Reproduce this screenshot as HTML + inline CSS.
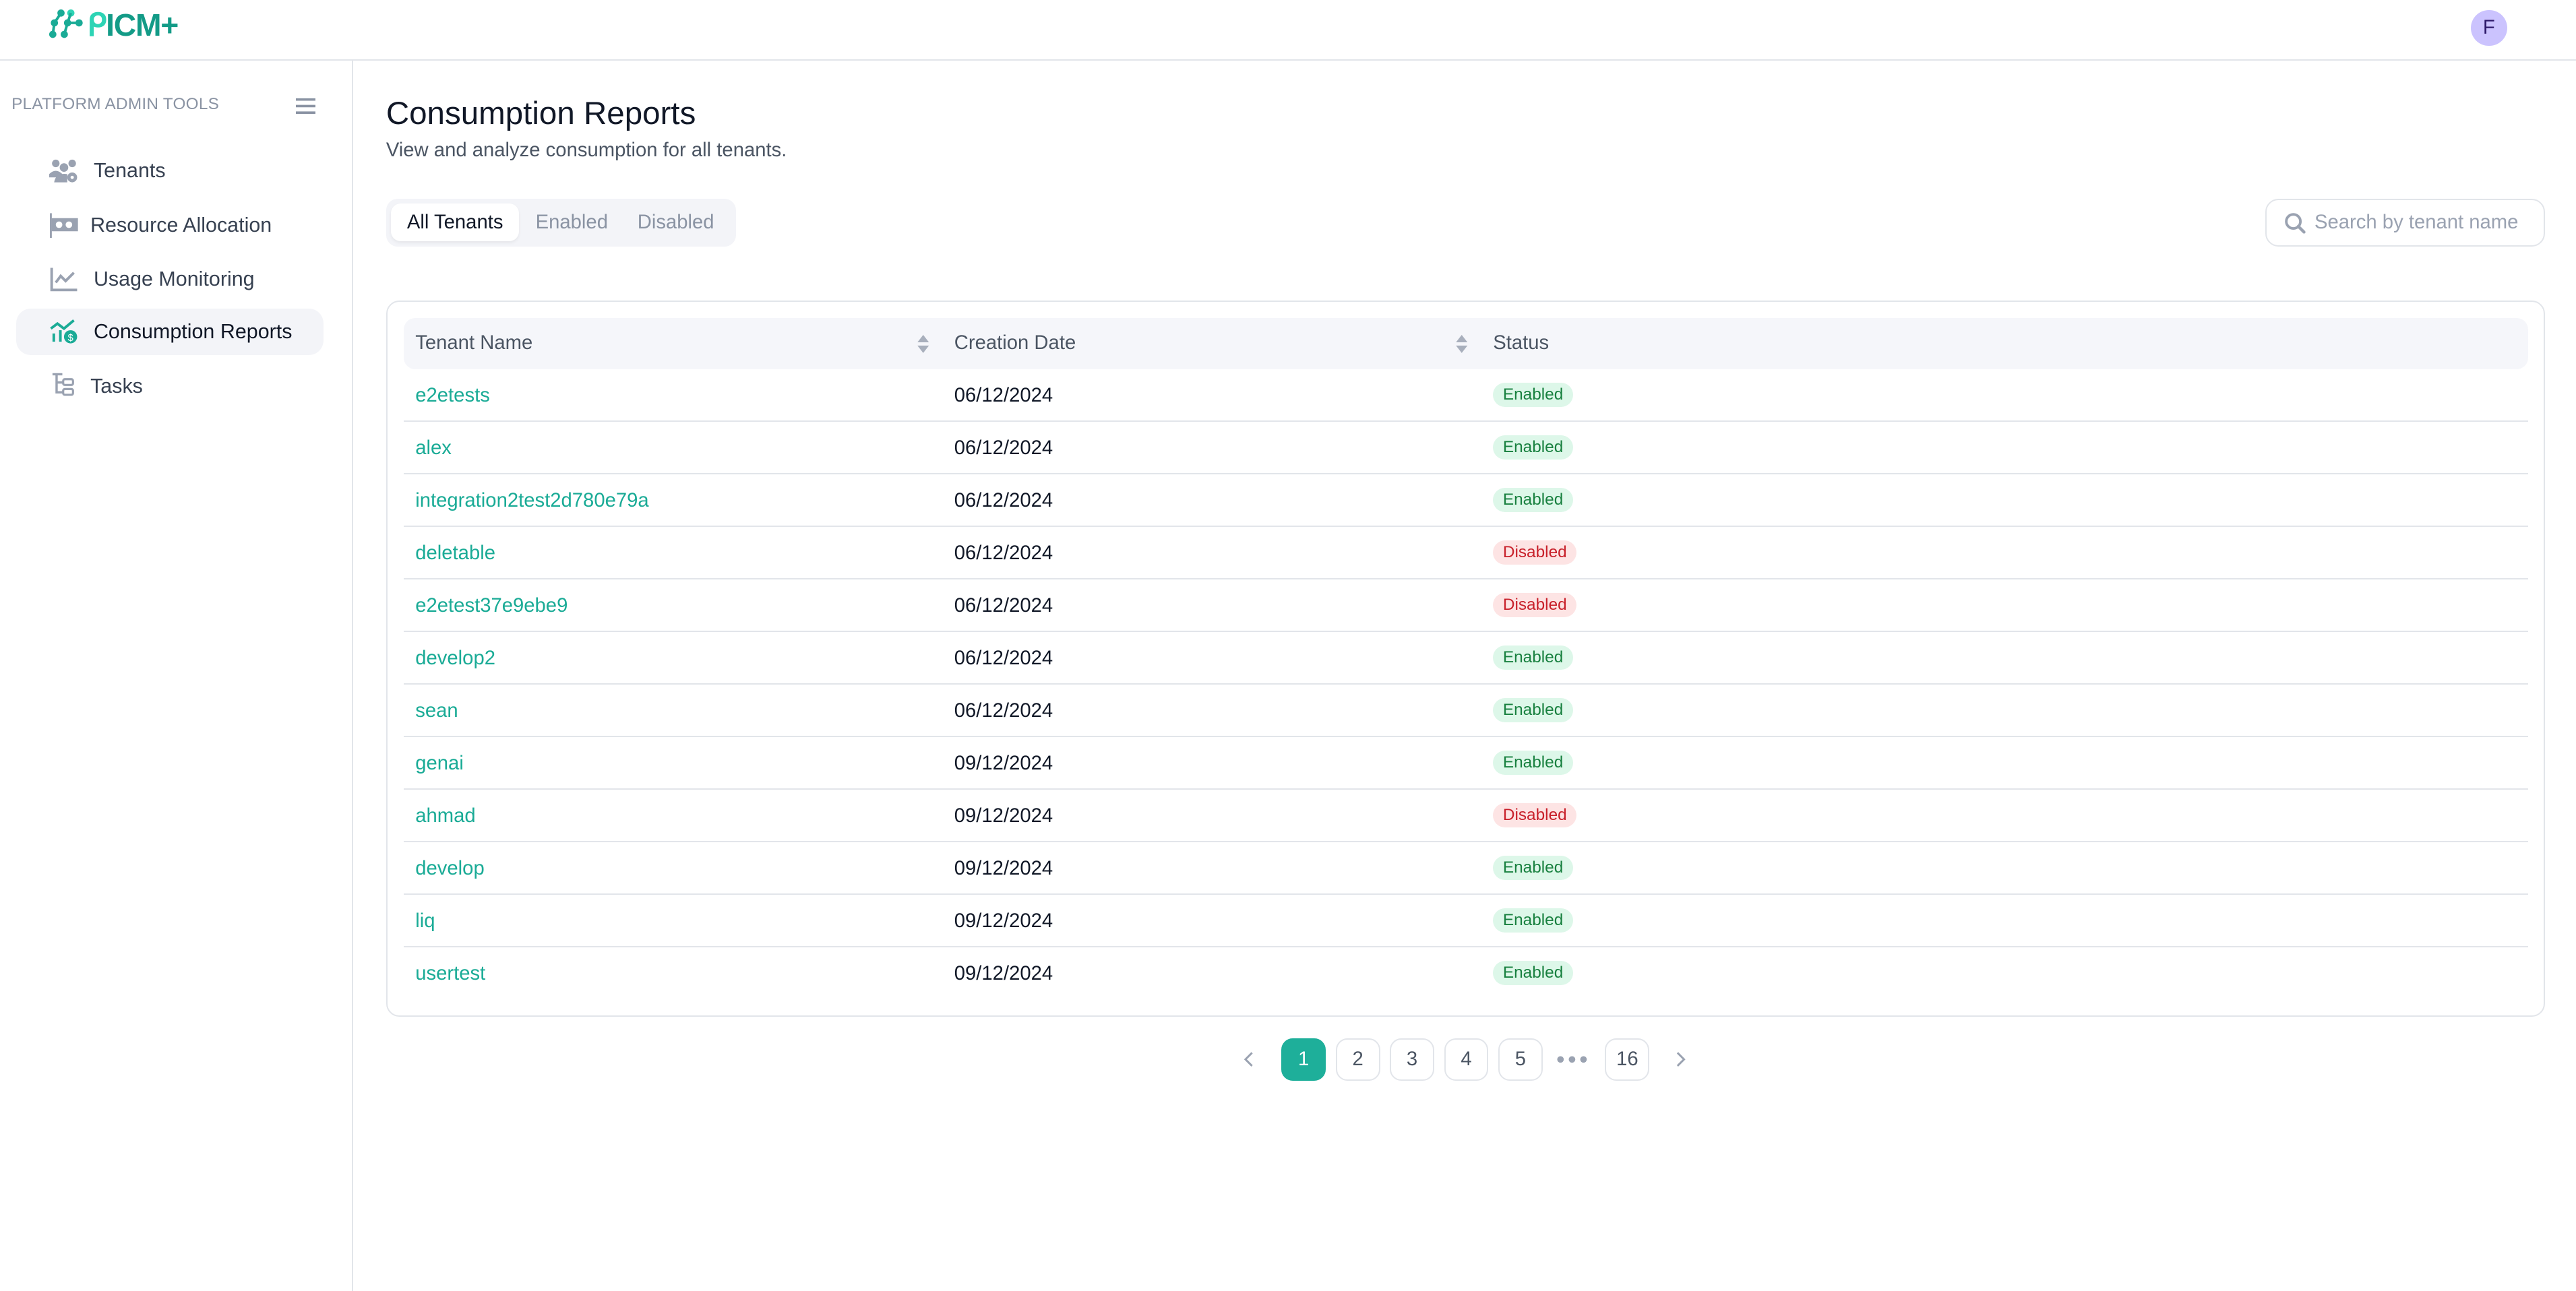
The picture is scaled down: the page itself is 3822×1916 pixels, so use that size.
<!DOCTYPE html>
<html><head><meta charset="utf-8"><style>
*{box-sizing:border-box;margin:0;padding:0}
html,body{width:3822px;height:1916px;overflow:hidden;background:#fff}
#z{zoom:2.4375;width:1568px;height:786px;position:relative;font-family:"Liberation Sans",sans-serif;color:#111827}
.abs{position:absolute}
.hdr{left:0;top:0;width:1568px;height:37px;border-bottom:1px solid #e2e5ea}
.side{left:0;top:37px;width:215px;height:749px;border-right:1px solid #e2e5ea}
.nav{position:absolute;left:10px;width:187px;height:28px;border-radius:9px;font-size:12.5px;color:#374151;line-height:28px}
.nav svg{position:absolute;left:20px;top:6px}
.nav span{position:absolute;left:47px}
.tabs{left:235px;top:121px;width:213px;height:29px;background:#f3f4f8;border-radius:7px}
.tab{position:absolute;top:3px;height:23px;line-height:23px;font-size:12px;color:#8a93a3}
.card{left:235px;top:183px;width:1314px;height:436px;border:1px solid #e2e5ea;border-radius:8px}
.th{position:absolute;left:10px;top:10px;width:1293px;height:31px;background:#f5f6fa;border-radius:7px;font-size:12px;color:#4b5563;line-height:31px}
.row{position:absolute;left:10px;width:1293px;height:32px;border-bottom:1px solid #e2e5ea;font-size:12px;line-height:32px}
.row .n{position:absolute;left:7px;color:#1aab96}
.row .d{position:absolute;left:335px;color:#111827}
.b{position:absolute;left:663px;top:8px;height:15px;line-height:15px;padding:0 6px;border-radius:8px;font-size:10px}
.en{background:#ddf7e9;color:#18803f}
.dis{background:#fde4e4;color:#c8202a}
.pg{position:absolute;top:632px;width:27px;height:26px;border:1px solid #e2e5ea;border-radius:7px;text-align:center;line-height:24px;font-size:12px;color:#4b5563}
</style></head><body><div id="z">
<div class="abs hdr">
 <svg class="abs" style="left:29px;top:5px" width="22" height="20" viewBox="0 0 22 20"><g fill="#1aab96"><circle cx="8" cy="3" r="2.2"/><circle cx="14" cy="3" r="2.2" fill="#2dd4b5"/><circle cx="4" cy="9" r="2.2"/><circle cx="12" cy="9" r="2.2"/><circle cx="19" cy="9" r="2.2"/><circle cx="3" cy="16" r="2.2"/><circle cx="10" cy="16" r="2.2"/></g><g stroke="#1aab96" stroke-width="1.6"><path d="M8 3L4 9M14 3L12 9M12 9L19 9M4 9L3 16M12 9L10 16"/></g></svg>
 <div class="abs" style="left:53px;top:4px;font-size:19px;font-weight:bold;color:#139b87;letter-spacing:-0.5px"><span style="color:#2dd4b5">ᑭ</span>ICM+</div>
 <div class="abs" style="left:1504px;top:6px;width:22px;height:22px;border-radius:50%;background:#cbc3fe;color:#2e1a6b;font-size:12px;text-align:center;line-height:22px">F</div>
</div>
<div class="abs side">
 <div class="abs" style="left:7px;top:21px;font-size:10px;color:#8a93a3;letter-spacing:.1px">PLATFORM ADMIN TOOLS</div>
 <svg class="abs" style="left:180px;top:22px" width="12" height="11"><path d="M0 1.5H12M0 5.5H12M0 9.5H12" stroke="#8a93a3" stroke-width="1.5"/></svg>
 <div class="nav" style="top:53px"><svg width="18" height="16"><g fill="#9aa2b1"><circle cx="4" cy="3.5" r="2.3"/><circle cx="14" cy="3.5" r="2.3"/><circle cx="9" cy="6" r="2.6"/><path d="M0 10q4-4 8 0v2H0zM3 15q1-6 8-5v5z"/><circle cx="14" cy="12" r="3"/></g><circle cx="14" cy="12" r="1" fill="#fff"/></svg><span>Tenants</span></div>
 <div class="nav" style="top:86px"><svg width="18" height="16"><rect x="1.5" y="4" width="16" height="8" fill="#9aa2b1"/><path d="M1 1v15" stroke="#9aa2b1" stroke-width="1.2"/><circle cx="6" cy="8" r="2" fill="#fff"/><circle cx="12" cy="8" r="2" fill="#fff"/></svg><span style="left:45px">Resource Allocation</span></div>
 <div class="nav" style="top:119px"><svg width="18" height="16"><path d="M1.5 1v13.5H17" stroke="#9aa2b1" stroke-width="1.6" fill="none"/><path d="M4 10l3-4 3 3 5-5" stroke="#9aa2b1" stroke-width="1.6" fill="none"/></svg><span>Usage Monitoring</span></div>
 <div class="nav" style="top:151px;background:#f3f4f8;color:#111827"><svg width="18" height="16"><path d="M1 6l4-3 4 3 6-5" stroke="#1aab96" stroke-width="1.6" fill="none"/><rect x="2" y="9" width="1.6" height="5" fill="#1aab96"/><rect x="6" y="7" width="1.6" height="7" fill="#1aab96"/><circle cx="13" cy="11" r="4" fill="#1aab96"/><text x="13" y="13.5" font-size="6" fill="#fff" text-anchor="middle" font-family="Liberation Sans">$</text></svg><span>Consumption Reports</span></div>
 <div class="nav" style="top:184px"><svg width="18" height="16"><path d="M2 1h6M4.5 1v11h4M4.5 6h4" stroke="#9aa2b1" stroke-width="1.4" fill="none"/><rect x="8.5" y="4" width="6" height="3.5" rx="1" fill="none" stroke="#9aa2b1" stroke-width="1.3"/><rect x="8.5" y="10" width="6" height="3.5" rx="1" fill="none" stroke="#9aa2b1" stroke-width="1.3"/></svg><span style="left:45px">Tasks</span></div>
</div>
<div class="abs" style="left:235px;top:58px;font-size:19.5px;color:#111827">Consumption Reports</div>
<div class="abs" style="left:235px;top:85px;font-size:12px;color:#4b5563">View and analyze consumption for all tenants.</div>
<div class="abs tabs">
 <div class="tab" style="left:3px;width:78px;background:#fff;border-radius:6px;color:#111827;text-align:center;box-shadow:0 1px 2px rgba(0,0,0,.06)">All Tenants</div>
 <div class="tab" style="left:91px">Enabled</div>
 <div class="tab" style="left:153px">Disabled</div>
</div>
<div class="abs" style="left:1379px;top:121px;width:170px;height:29px;border:1px solid #e2e5ea;border-radius:8px">
 <svg class="abs" style="left:10px;top:7px" width="14" height="14"><circle cx="6" cy="6" r="4.3" fill="none" stroke="#9aa2b1" stroke-width="1.6"/><path d="M9 9l3.5 3.5" stroke="#9aa2b1" stroke-width="1.8" stroke-linecap="round"/></svg>
 <div class="abs" style="left:29px;top:7px;font-size:12px;color:#9aa2b1">Search by tenant name</div>
</div>
<div class="abs card">
 <div class="th"><span style="position:absolute;left:7px">Tenant Name</span>
  <svg style="position:absolute;left:312px;top:10px" width="8" height="11"><path d="M4 0L7.5 4.5H.5zM4 11L.5 6.5H7.5z" fill="#a8afbc"/></svg>
  <span style="position:absolute;left:335px">Creation Date</span>
  <svg style="position:absolute;left:640px;top:10px" width="8" height="11"><path d="M4 0L7.5 4.5H.5zM4 11L.5 6.5H7.5z" fill="#a8afbc"/></svg>
  <span style="position:absolute;left:663px">Status</span></div>
 <div class="row" style="top:41px"><span class="n">e2etests</span><span class="d">06/12/2024</span><span class="b en">Enabled</span></div>
 <div class="row" style="top:73px"><span class="n">alex</span><span class="d">06/12/2024</span><span class="b en">Enabled</span></div>
 <div class="row" style="top:105px"><span class="n">integration2test2d780e79a</span><span class="d">06/12/2024</span><span class="b en">Enabled</span></div>
 <div class="row" style="top:137px"><span class="n">deletable</span><span class="d">06/12/2024</span><span class="b dis">Disabled</span></div>
 <div class="row" style="top:169px"><span class="n">e2etest37e9ebe9</span><span class="d">06/12/2024</span><span class="b dis">Disabled</span></div>
 <div class="row" style="top:201px"><span class="n">develop2</span><span class="d">06/12/2024</span><span class="b en">Enabled</span></div>
 <div class="row" style="top:233px"><span class="n">sean</span><span class="d">06/12/2024</span><span class="b en">Enabled</span></div>
 <div class="row" style="top:265px"><span class="n">genai</span><span class="d">09/12/2024</span><span class="b en">Enabled</span></div>
 <div class="row" style="top:297px"><span class="n">ahmad</span><span class="d">09/12/2024</span><span class="b dis">Disabled</span></div>
 <div class="row" style="top:329px"><span class="n">develop</span><span class="d">09/12/2024</span><span class="b en">Enabled</span></div>
 <div class="row" style="top:361px"><span class="n">liq</span><span class="d">09/12/2024</span><span class="b en">Enabled</span></div>
 <div class="row" style="top:393px;border-bottom:none"><span class="n">usertest</span><span class="d">09/12/2024</span><span class="b en">Enabled</span></div>
</div>
<svg class="abs" style="left:756px;top:640px" width="8" height="10"><path d="M6 1L2 5l4 4" stroke="#9aa2b1" stroke-width="1.2" fill="none"/></svg>
<div class="pg" style="left:780px;background:#1eaf9a;border-color:#1eaf9a;color:#fff">1</div>
<div class="pg" style="left:813px">2</div>
<div class="pg" style="left:846px">3</div>
<div class="pg" style="left:879px">4</div>
<div class="pg" style="left:912px">5</div>
<svg class="abs" style="left:947px;top:642px" width="20" height="6"><g fill="#9aa2b1"><circle cx="3" cy="3" r="2"/><circle cx="10" cy="3" r="2"/><circle cx="17" cy="3" r="2"/></g></svg>
<div class="pg" style="left:977px">16</div>
<svg class="abs" style="left:1019px;top:640px" width="8" height="10"><path d="M2 1l4 4-4 4" stroke="#9aa2b1" stroke-width="1.2" fill="none"/></svg>
</div></body></html>
